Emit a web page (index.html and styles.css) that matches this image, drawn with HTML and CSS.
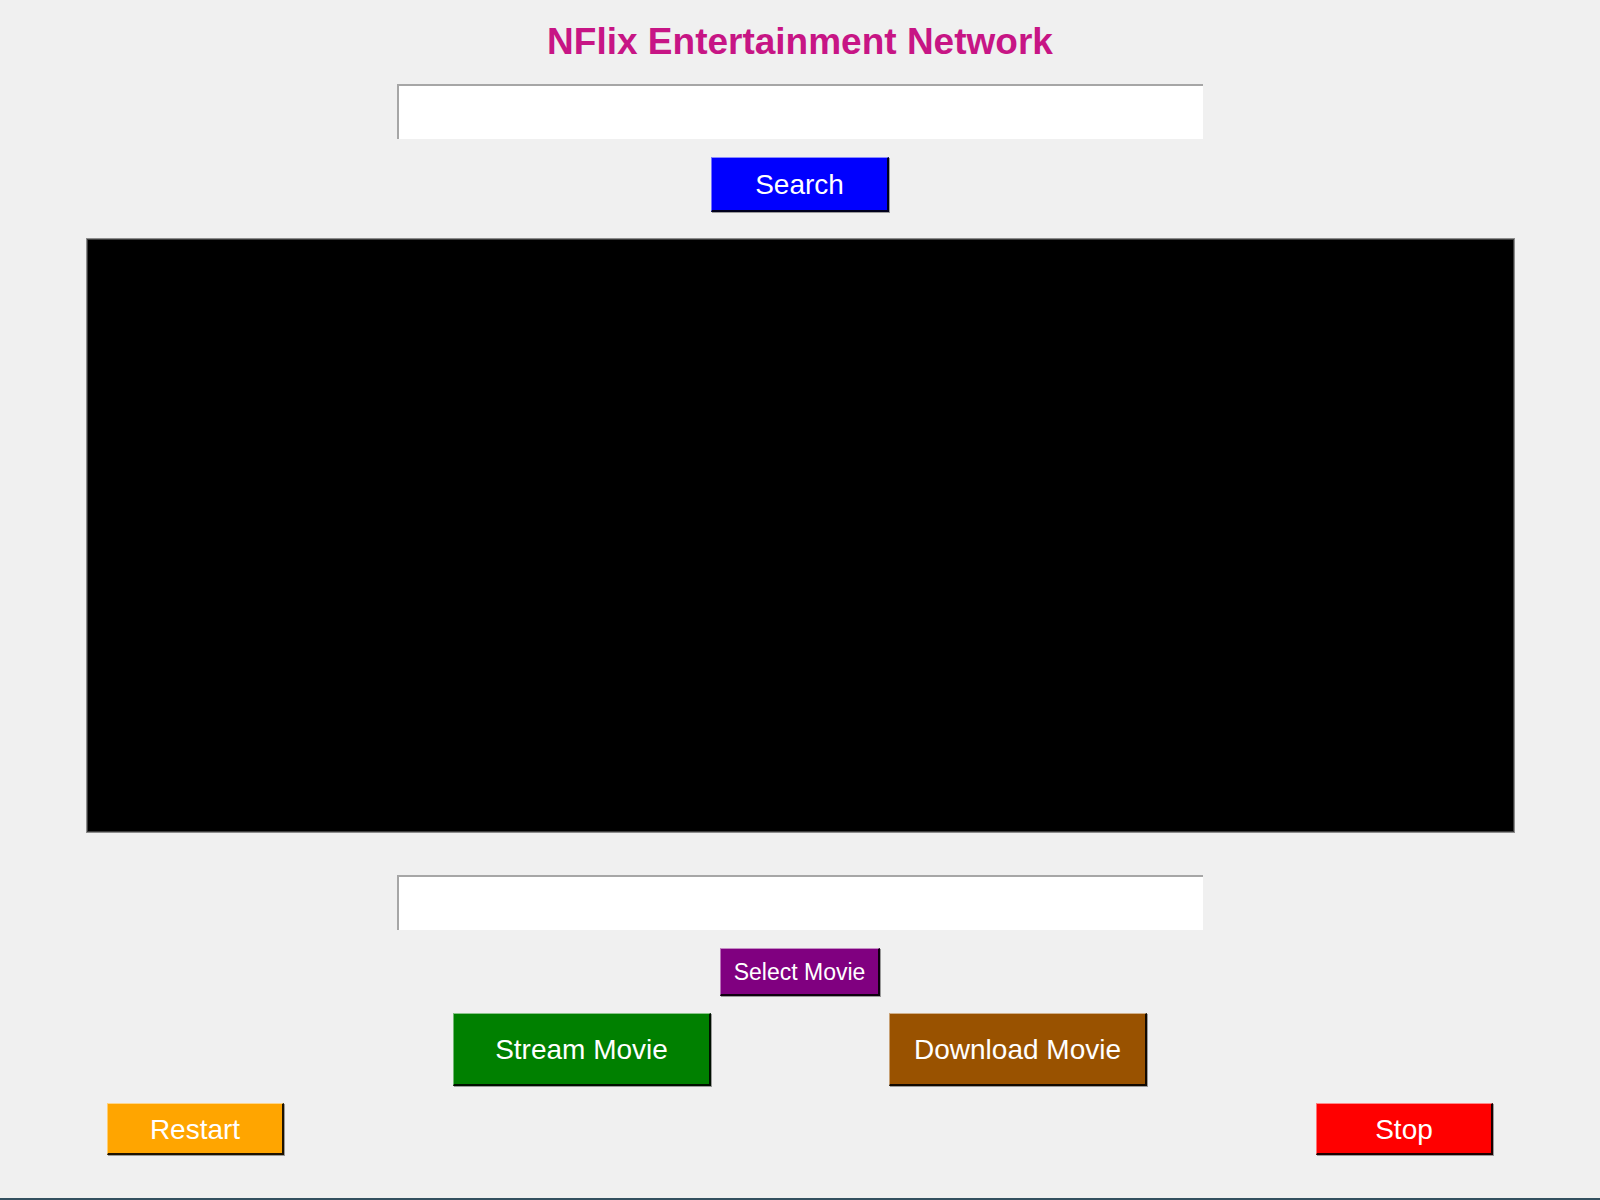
FILE: index.html
```html
<!DOCTYPE html>
<html lang="en">
<head>
<meta charset="utf-8">
<title>NFlix Entertainment Network</title>
<link rel="stylesheet" href="styles.css">
</head>
<body>
<div class="app">
  <h1 class="title">NFlix Entertainment Network</h1>
  <input class="entry entry-search" type="text">
  <button class="btn btn-search">Search</button>
  <div class="screen"></div>
  <input class="entry entry-select" type="text">
  <button class="btn btn-select">Select Movie</button>
  <div class="action-row">
    <button class="btn btn-big btn-stream">Stream Movie</button>
    <button class="btn btn-big btn-download">Download Movie</button>
  </div>
  <div class="control-row">
    <button class="btn btn-small btn-restart">Restart</button>
    <button class="btn btn-small btn-stop">Stop</button>
  </div>
</div>
</body>
</html>
```

FILE: styles.css
```css
html, body {
  margin: 0;
  padding: 0;
  background: #f0f0f0;
}

.app {
  width: 1600px;
  height: 1200px;
  box-sizing: border-box;
  border-bottom: 2px solid #33505f;
  display: flex;
  flex-direction: column;
  align-items: center;
  font-family: "Liberation Sans", Arial, sans-serif;
}

.title {
  margin: 22px 0 0 0;
  font-size: 37px;
  line-height: 40px;
  height: 40px;
  font-weight: bold;
  color: #c71585;
}

.entry {
  display: block;
  box-sizing: border-box;
  width: 806px;
  height: 55px;
  margin: 0;
  padding: 0 6px;
  background: #ffffff;
  border: none;
  border-top: 2px solid #a6a6a6;
  border-left: 2px solid #a6a6a6;
  outline: none;
  font-family: "Liberation Sans", Arial, sans-serif;
  font-size: 22px;
}

.entry-search {
  margin-top: 22px;
}

.entry-select {
  margin-top: 42px;
}

.btn {
  display: flex;
  align-items: center;
  justify-content: center;
  box-sizing: border-box;
  margin: 0;
  padding: 2px 0 0 0;
  color: #ffffff;
  font-family: "Liberation Sans", Arial, sans-serif;
  font-size: 28px;
  font-weight: normal;
  border-style: solid;
  border-width: 1px 2px 2px 1px;
  border-color: rgba(255, 255, 255, 0.55) rgba(0, 0, 0, 0.88) rgba(0, 0, 0, 0.88) rgba(255, 255, 255, 0.45);
  box-shadow: 1px 1px 0 #9a9a9a;
  cursor: pointer;
}

.btn-search {
  margin-top: 18px;
  width: 178px;
  height: 55px;
  background: #0000ff;
}

.screen {
  margin-top: 26px;
  width: 1429px;
  height: 595px;
  box-sizing: border-box;
  background: #000000;
  border: 1px solid #8c8c8c;
  box-shadow: inset 0 0 0 1px #3c3c3c;
}

.btn-select {
  margin-top: 18px;
  width: 160px;
  height: 48px;
  font-size: 23px;
  background: #800080;
}

.action-row {
  margin-top: 17px;
  display: flex;
  gap: 178px;
}

.btn-big {
  width: 258px;
  height: 73px;
}

.btn-stream {
  background: #008000;
}

.btn-download {
  background: #995200;
}

.control-row {
  margin-top: 17px;
  width: 100%;
  box-sizing: border-box;
  padding: 0 107px;
  display: flex;
  justify-content: space-between;
}

.btn-small {
  width: 177px;
  height: 52px;
}

.btn-restart {
  background: #ffa500;
}

.btn-stop {
  background: #ff0000;
}
```
